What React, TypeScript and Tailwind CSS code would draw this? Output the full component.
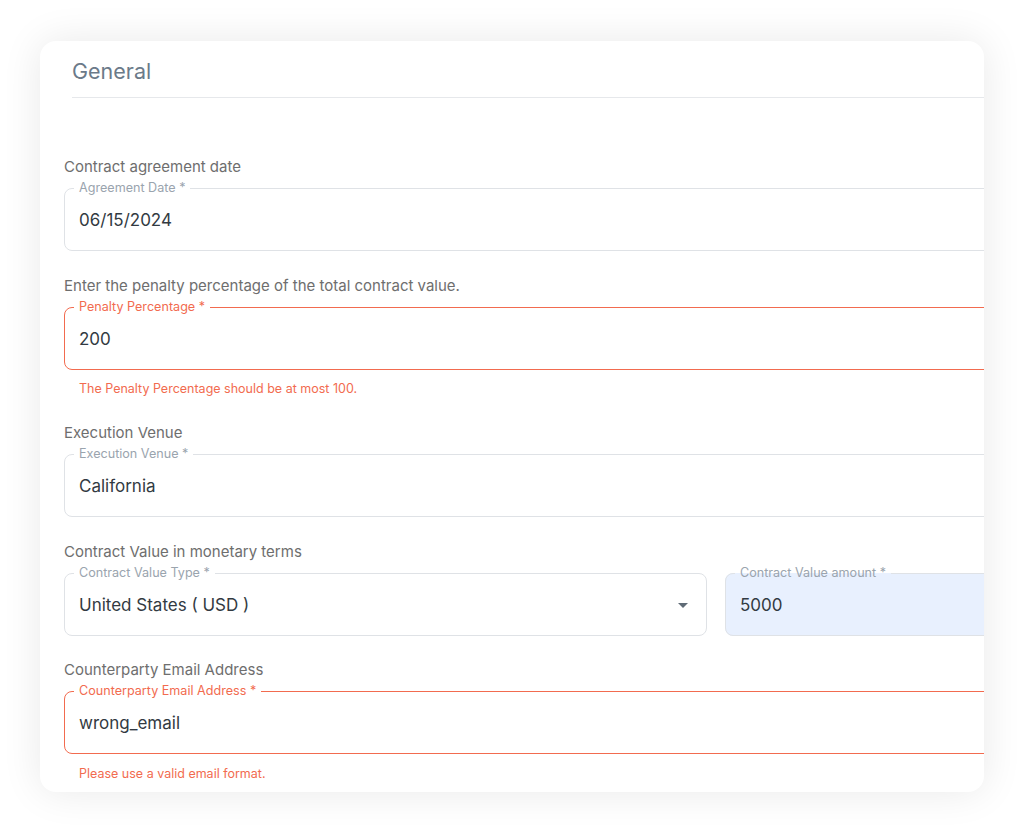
type FieldProps = {
  legend: string
  value: string
  error?: string
  filled?: boolean
  select?: boolean
  errorGap?: string
}

function Field({ legend, value, error, filled, select, errorGap = "mt-[12px]" }: FieldProps) {
  const border = error ? "border-[#f26b4f]" : "border-[#dfe2e6]"
  const legendColor = error ? "text-[#f26b4f]" : "text-[#9aa4ae]"
  return (
    <div>
      <fieldset
        className={`h-[70px] rounded-lg border ${border} ${
          filled ? "bg-[#e8f0fe]" : "bg-white"
        } pl-[9px] pr-4`}
      >
        <legend className={`px-[5px] text-[12.6px] leading-[14px] ${legendColor}`}>
          {legend}
        </legend>
        <div className="flex h-[51px] items-center justify-between pl-[5px] text-[17px] text-[#323a42]">
          <span>{value}</span>
          {select && (
            <svg width="10" height="5" viewBox="0 0 10 5" className="mr-[2px]">
              <path d="M0 0h10L5 5z" fill="#5f6b76" />
            </svg>
          )}
        </div>
      </fieldset>
      {error && (
        <div className={`${errorGap} pl-[15px] text-[12.5px] leading-[14px] text-[#f26b4f]`}>
          {error}
        </div>
      )}
    </div>
  )
}

function Label({ children }: { children: React.ReactNode }) {
  return (
    <div className="mb-[6px] text-[15px] leading-[17px] text-[#6e6e6e]">
      {children}
    </div>
  )
}

export default function App() {
  return (
    <div
      className="min-h-[832px] bg-white px-[40px] pt-[41px]"
      style={{ fontFamily: "Inter, 'Noto Sans', sans-serif" }}
    >
      <div className="h-[751px] w-[944px] overflow-hidden rounded-2xl bg-white shadow-[0_0_40px_rgba(0,0,0,0.09)]">
        <div className="w-[1300px] pl-[24px]">
          <div className="ml-[8px] border-b border-[#e6e8eb] pb-[13px] pt-[17px]">
            <div className="text-[21.5px] leading-[26px] text-[#6b7a89]">General</div>
          </div>

          <div className="flex flex-col pt-[60px]">
            <Label>Contract agreement date</Label>
            <Field legend="Agreement Date *" value="06/15/2024" />

            <div className="mt-[26px]">
              <Label>Enter the penalty percentage of the total contract value.</Label>
              <Field
                legend="Penalty Percentage *"
                value="200"
                error="The Penalty Percentage should be at most 100."
              />
            </div>

            <div className="mt-[28px]">
              <Label>Execution Venue</Label>
              <Field legend="Execution Venue *" value="California" />
            </div>

            <div className="mt-[26px]">
              <Label>Contract Value in monetary terms</Label>
              <div className="grid grid-cols-[643px_643px] gap-[18px]">
                <Field legend="Contract Value Type *" value="United States ( USD )" select />
                <Field legend="Contract Value amount *" value="5000" filled />
              </div>
            </div>

            <div className="mt-[25px]">
              <Label>Counterparty Email Address</Label>
              <Field
                legend="Counterparty Email Address *"
                value="wrong_email"
                error="Please use a valid email format."
                errorGap="mt-[13px]"
              />
            </div>
          </div>
        </div>
      </div>
    </div>
  )
}
